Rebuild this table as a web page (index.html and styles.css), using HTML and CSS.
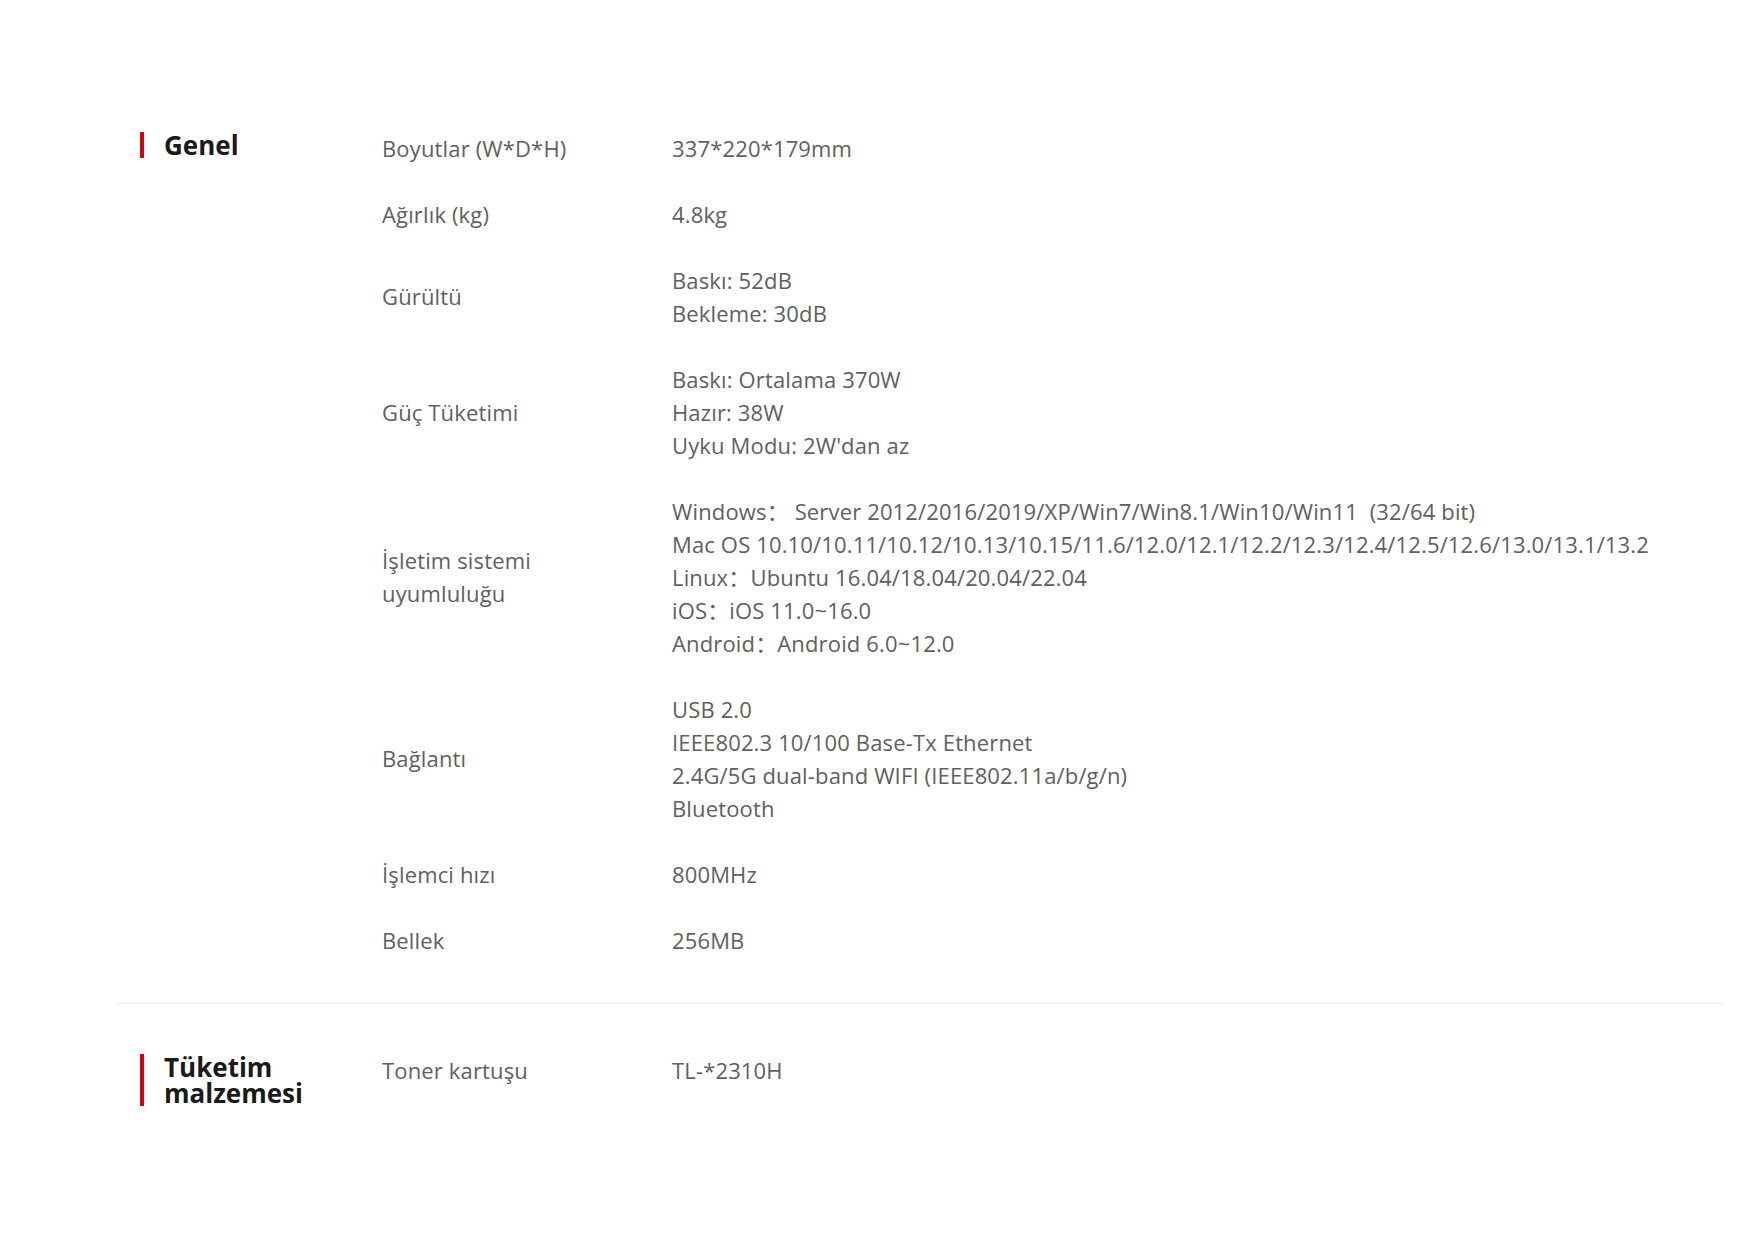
FILE: index.html
```html
<!DOCTYPE html>
<html lang="tr">
<head>
<meta charset="utf-8">
<title>Özellikler</title>
<link rel="stylesheet" href="styles.css">
</head>
<body>
<div class="specs">
  <section class="group">
    <h2 class="group-title"><span>Genel</span></h2>
    <div class="rows">
      <div class="row"><div class="label">Boyutlar (W*D*H)</div><div class="value">337*220*179mm</div></div>
      <div class="row"><div class="label">Ağırlık (kg)</div><div class="value">4.8kg</div></div>
      <div class="row"><div class="label">Gürültü</div><div class="value">Baskı: 52dB<br>Bekleme: 30dB</div></div>
      <div class="row"><div class="label">Güç Tüketimi</div><div class="value">Baskı: Ortalama 370W<br>Hazır: 38W<br>Uyku Modu: 2W'dan az</div></div>
      <div class="row"><div class="label">İşletim sistemi uyumluluğu</div><div class="value">Windows：&nbsp;Server 2012/2016/2019/XP/Win7/Win8.1/Win10/Win11&nbsp;&nbsp;(32/64 bit)<br>Mac OS 10.10/10.11/10.12/10.13/10.15/11.6/12.0/12.1/12.2/12.3/12.4/12.5/12.6/13.0/13.1/13.2<br>Linux：Ubuntu 16.04/18.04/20.04/22.04<br>iOS：iOS 11.0~16.0<br>Android：Android 6.0~12.0</div></div>
      <div class="row"><div class="label">Bağlantı</div><div class="value">USB 2.0<br>IEEE802.3 10/100 Base-Tx Ethernet<br>2.4G/5G dual-band WIFI (IEEE802.11a/b/g/n)<br>Bluetooth</div></div>
      <div class="row"><div class="label">İşlemci hızı</div><div class="value">800MHz</div></div>
      <div class="row"><div class="label">Bellek</div><div class="value">256MB</div></div>
    </div>
  </section>
  <section class="group">
    <h2 class="group-title"><span>Tüketim malzemesi</span></h2>
    <div class="rows">
      <div class="row"><div class="label">Toner kartuşu</div><div class="value">TL-*2310H</div></div>
    </div>
  </section>
</div>
</body>
</html>
```
FILE: styles.css
```css
html, body {
  margin: 0;
  padding: 0;
  background: #ffffff;
}

body {
  font-family: "Open Sans", "Noto Sans", "Noto Sans CJK SC", sans-serif;
  color: #606060;
}

.specs {
  margin: 0 31px 0 116px;
  padding-top: 85px;
}

.group {
  display: grid;
  grid-template-columns: 266px 1fr;
  padding: 30px 0;
}

.group + .group {
  border-top: 1px solid #eeeeee;
  padding-top: 33px;
}

.group-title {
  margin: 17px 0 0 24px;
  padding-left: 20px;
  padding-right: 8px;
  border-left: 4px solid #d7000f;
  align-self: start;
  font-size: 26px;
  line-height: 26px;
  font-weight: 700;
  color: #1a1a1a;
}

.rows {
  display: flex;
  flex-direction: column;
}

.row {
  display: grid;
  grid-template-columns: 290px 1fr;
  align-items: center;
  padding: 16.5px 0;
  font-size: 22px;
  line-height: 33px;
  letter-spacing: 0.15px;
}

.label {
  padding-right: 40px;
}

.value {
  white-space: nowrap;
}
```
